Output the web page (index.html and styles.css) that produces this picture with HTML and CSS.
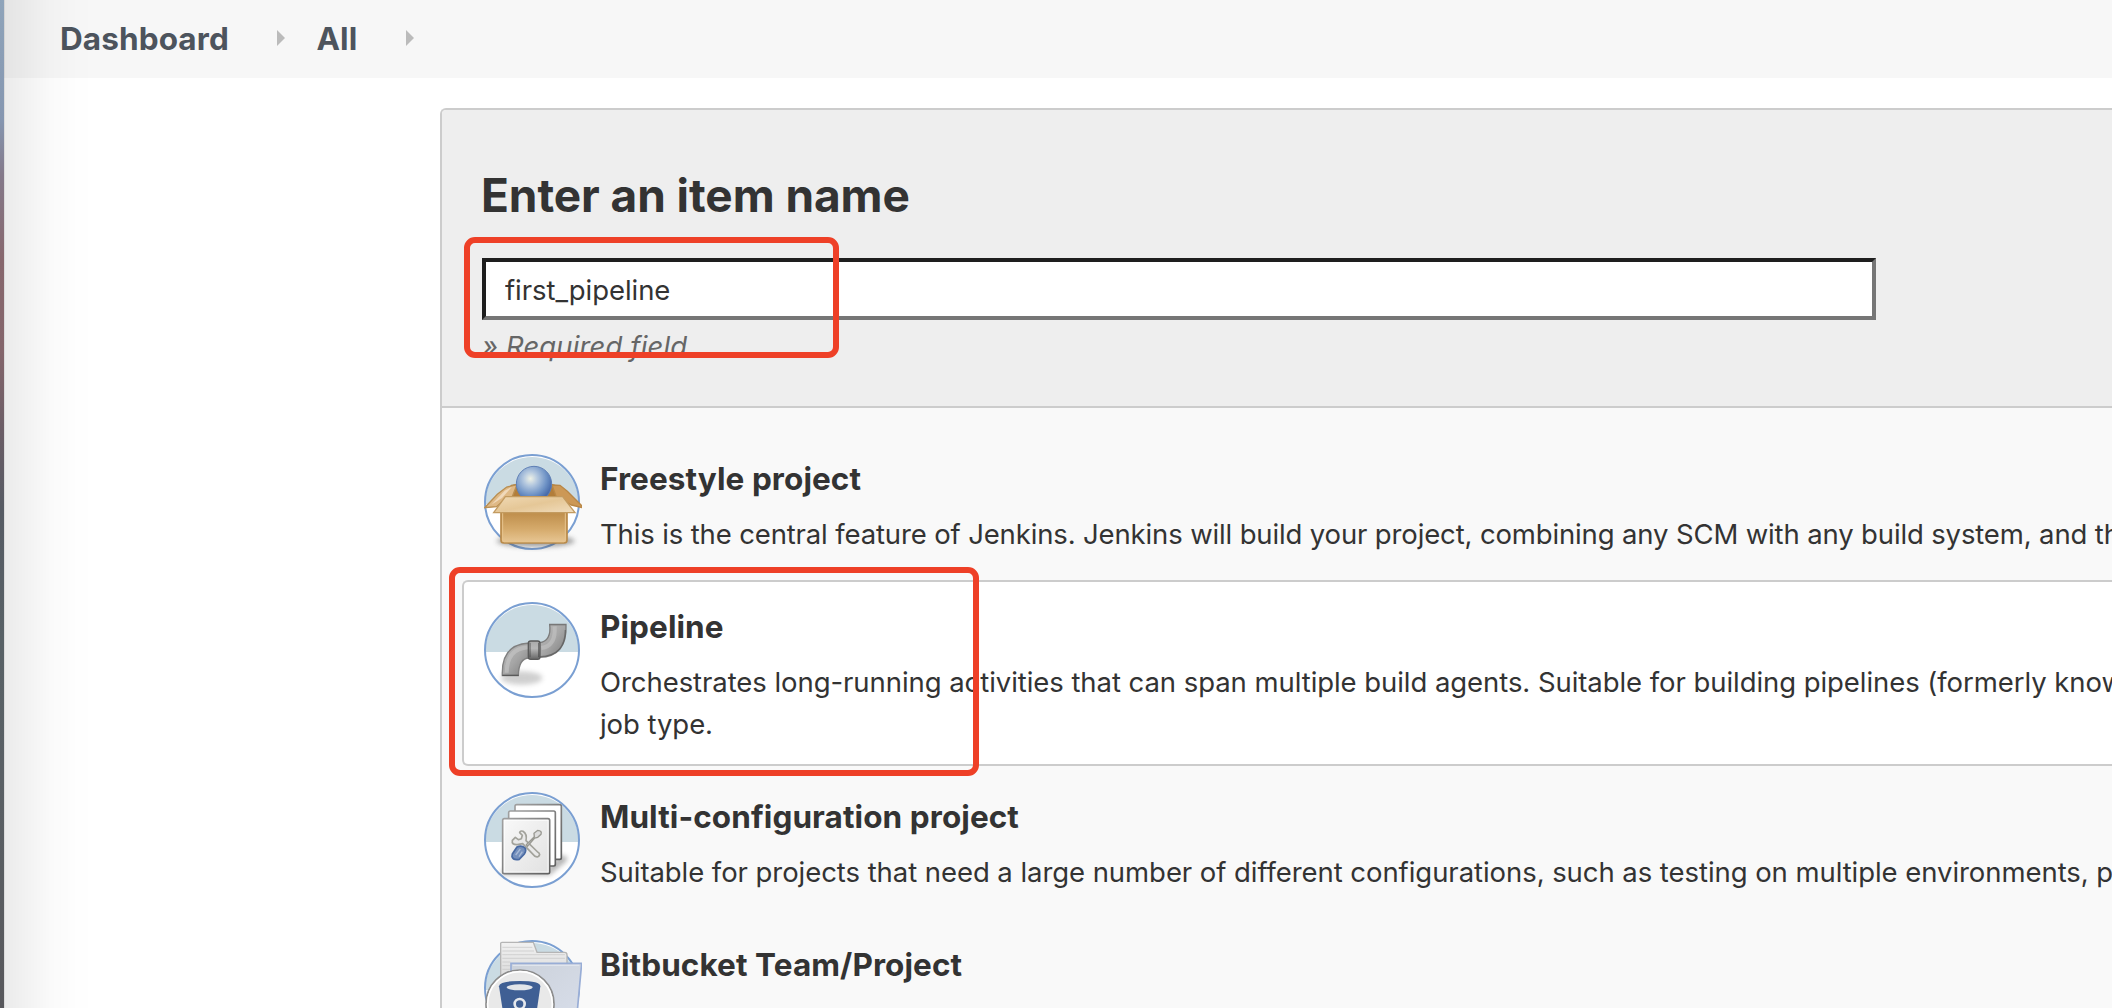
FILE: index.html
```html
<!DOCTYPE html>
<html lang="en">
<head>
<meta charset="utf-8">
<title>New Item [Jenkins]</title>
<link rel="stylesheet" href="styles.css">
</head>
<body>
<div class="window">
  <nav class="breadcrumbs">
    <span class="crumb">Dashboard</span><i class="arrow"></i>
    <span class="crumb">All</span><i class="arrow"></i>
  </nav>
  <main class="panel">
    <section class="name-section">
      <h1>Enter an item name</h1>
      <input class="name-input" type="text" value="first_pipeline">
      <div class="hint">» Required field</div>
      <div class="mark mark-name"></div>
    </section>
    <ul class="items">
      <li class="item item-freestyle">
        <svg class="icon" viewBox="0 0 98 98">
          <defs>
            <linearGradient id="front" x1="0" y1="0" x2="0" y2="1"><stop offset="0" stop-color="#bd8c49"/><stop offset=".55" stop-color="#d5aa6b"/><stop offset="1" stop-color="#e8c795"/></linearGradient>
            <linearGradient id="flap" x1="0" y1="0" x2="1" y2="1"><stop offset="0" stop-color="#f0d9b4"/><stop offset=".5" stop-color="#e5c797"/><stop offset="1" stop-color="#f1ddbd"/></linearGradient>
            <radialGradient id="ball" cx=".4" cy=".35" r=".65"><stop offset="0" stop-color="#eef1e6"/><stop offset=".3" stop-color="#b4c8df"/><stop offset=".7" stop-color="#6f93c6"/><stop offset="1" stop-color="#4568a8"/></radialGradient>
            <filter id="soft" x="-30%" y="-60%" width="160%" height="220%"><feGaussianBlur stdDeviation="8"/></filter>
          </defs>
          <circle cx="48" cy="48" r="47" fill="#fff"/>
          <path d="M1 50a47 47 0 1 1 94 0z" fill="#cadbe3"/>
          <circle cx="48" cy="48" r="47" fill="none" stroke="#7a9fd2" stroke-width="2"/>
          <g class="art" transform="scale(.33333) translate(-42 -42)">
            <ellipse cx="197" cy="303" rx="117" ry="18" fill="#444" opacity=".5" filter="url(#soft)"/>
            <path d="M123 136l20-3h100l20 5-8 34H115z" fill="#b27d3a" stroke="#a5742f" stroke-width="3"/>
            <path d="M246 135l24 1 22 18 50 50-38-9-46-26z" fill="#cc9856" stroke="#b98746" stroke-width="4"/>
            <path d="M141 134l-31 7-28 22-38 40 36-3 30-28 16 0z" fill="#dfb986" stroke="#b98e51" stroke-width="4"/>
            <path d="M104 152l-40 42 32-20 30-34z" fill="#f0d9bb"/>
            <circle cx="192" cy="132" r="53" fill="url(#ball)" stroke="#5f80b5" stroke-width="3"/>
            <path d="M93 215h198v85q0 9-9 9H102q-9 0-9-9z" fill="url(#front)" stroke="#b98a49" stroke-width="5"/>
            <path d="M98 219v82q0 4 5 4h178q5 0 5-4v-82" fill="none" stroke="#e7c48f" stroke-width="3"/>
            <path d="M106 170h172l37 48H71z" fill="url(#flap)" stroke="#c39b60" stroke-width="4"/>
          </g>
        </svg>
        <div class="text"><h2>Freestyle project</h2>
        <p>This is the central feature of Jenkins. Jenkins will build your project, combining any SCM with any build system, and this</p></div>
      </li>
      <li class="item active">
        <svg class="icon" viewBox="0 0 98 98">
          <defs>
            <linearGradient id="pipe" x1="0" y1="0" x2="1" y2="1"><stop offset="0" stop-color="#bdbdbd"/><stop offset=".5" stop-color="#a6a6a6"/><stop offset="1" stop-color="#7c7c7c"/></linearGradient>
            <linearGradient id="coupling" x1="0" y1="0" x2="0" y2="1"><stop offset="0" stop-color="#aaa"/><stop offset=".4" stop-color="#b8b8b8"/><stop offset="1" stop-color="#666"/></linearGradient>
          </defs>
          <circle cx="48" cy="48" r="47" fill="#fff"/>
          <path d="M1 50a47 47 0 1 1 94 0z" fill="#cadbe3"/>
          <circle cx="48" cy="48" r="47" fill="none" stroke="#7a9fd2" stroke-width="2"/>
          <g class="art" transform="scale(.33333) translate(-42 -36)">
            <ellipse cx="155" cy="264" rx="62" ry="20" fill="#777" opacity=".35" filter="url(#soft)"/>
            <path d="M97 257q-4-94 81-98v45q-32 0-33 53z" fill="url(#pipe)" stroke="#808080" stroke-width="4"/>
            <path d="M110 248q1-72 64-76" fill="none" stroke="#c6c6c6" stroke-width="12" opacity=".6"/>
            <path d="M239 103h49q5 97-80 99v-44q37-5 31-55z" fill="url(#pipe)" stroke="#7b7b7b" stroke-width="4"/>
            <path d="M254 109q4 59-40 65" fill="none" stroke="#c6c6c6" stroke-width="12" opacity=".55"/>
            <path d="M97 256h49" stroke="#5a5a5a" stroke-width="4"/>
            <path d="M239 104h49" stroke="#777" stroke-width="4"/>
            <path d="M286 120q0 78-76 80" fill="none" stroke="#555" stroke-width="4" opacity=".6"/>
            <rect x="175" y="153" width="35" height="55" rx="7" fill="url(#coupling)" stroke="#5a5a5a" stroke-width="4"/>
            <path d="M180 158v44M206 158v44" stroke="#444" stroke-width="4" opacity=".6"/>
          </g>
        </svg>
        <div class="text"><h2>Pipeline</h2>
        <p>Orchestrates long-running activities that can span multiple build agents. Suitable for building pipelines (formerly known<br>job type.</p></div>
        <div class="mark mark-item"></div>
      </li>
      <li class="item">
        <svg class="icon" viewBox="0 0 98 98">
          <defs>
            <linearGradient id="paper" x1="0" y1="0" x2="1" y2="1"><stop offset="0" stop-color="#f8f8f8"/><stop offset="1" stop-color="#e2e2e2"/></linearGradient>
            <linearGradient id="edge" x1="0" y1="0" x2="1" y2="1"><stop offset="0" stop-color="#a0a0a0"/><stop offset="1" stop-color="#606060"/></linearGradient>
          </defs>
          <circle cx="48" cy="48" r="47" fill="#fff"/>
          <path d="M1 50a47 47 0 1 1 94 0z" fill="#cadbe3"/>
          <circle cx="48" cy="48" r="47" fill="none" stroke="#7a9fd2" stroke-width="2"/>
          <g class="art" transform="scale(.33333) translate(-42 -36)">
            <path d="M95 270h145v-24h20v-18h30v15l-30 24-20 18H100z" fill="#555" opacity=".45" filter="url(#soft)"/>
            <g fill="#fff" stroke="url(#edge)" stroke-width="5">
              <rect x="135" y="74" width="139" height="164" rx="5"/>
              <rect x="116" y="93" width="140" height="165" rx="5"/>
              <rect x="98" y="116" width="141" height="165" rx="5"/>
            </g>
            <rect x="104" y="122" width="129" height="153" fill="url(#paper)"/>
            <path d="M127 181q-3 14 15 13l16-3 37 38q10 5 14-5-1-6-6-8l-35-34q4-20-9-28-9-3-10 4l8 8-3 10-9 3-9-7z" fill="#e9e9e9" stroke="#a2a29b" stroke-width="5" stroke-linejoin="round"/>
            <path d="M169 194l24-24-1-10 11-9q14 1 10 12l-10 9-9 2-22 25z" fill="#ddd" stroke="#999992" stroke-width="4"/>
            <path d="M127 222l14-21q14-6 24 3 5 8-2 18l-15 16q-18 4-22-8z" fill="#7590bd" stroke="#4869a2" stroke-width="5"/>
            <path d="M137 225l14-18M147 230l10-15" stroke="#a8bad7" stroke-width="4"/>
          </g>
        </svg>
        <div class="text"><h2>Multi-configuration project</h2>
        <p>Suitable for projects that need a large number of different configurations, such as testing on multiple environments, platform</p></div>
      </li>
      <li class="item">
        <svg class="icon" viewBox="0 0 98 98">
          <defs>
            <linearGradient id="folder" x1="0" y1="0" x2="1" y2="1"><stop offset="0" stop-color="#cbd1da"/><stop offset="1" stop-color="#d8deea"/></linearGradient>
            <linearGradient id="sheet" x1="0" y1="0" x2="0" y2="1"><stop offset="0" stop-color="#f1f1f1"/><stop offset="1" stop-color="#c9c9c9"/></linearGradient>
          </defs>
          <circle cx="48" cy="48" r="47" fill="#fff"/>
          <path d="M1 50a47 47 0 1 1 94 0z" fill="#cadbe3"/>
          <circle cx="48" cy="48" r="47" fill="none" stroke="#7a9fd2" stroke-width="2"/>
          <g class="art" transform="scale(.33333) translate(-42 -45)">
            <path d="M92 55q0-3 4-3h94l11 30h83q7 0 7 8v150H92z" fill="url(#sheet)" stroke="#b5b5b5" stroke-width="4"/>
            <path d="M97 67h90M97 78h95M97 89h188M97 100h188M97 111h24M97 122h24M97 133h24" stroke="#c6c6c6" stroke-width="2"/>
            <path d="M123 115h212l-16 175H123z" fill="url(#folder)" stroke="#98add6" stroke-width="5"/>
            <path d="M128 121h200" stroke="#e4e8f0" stroke-width="3"/>
            <circle cx="150" cy="237" r="102" fill="#e9e9e9" stroke="#8c8c8c" stroke-width="5"/>
            <circle cx="150" cy="237" r="97" fill="none" stroke="#fff" stroke-width="5"/>
            <path d="M87 184q0-16 62-16t62 16l-15 103q-47 22-93 0z" fill="#3f5f94"/>
            <ellipse cx="149" cy="187" rx="39" ry="9" fill="#e2e5e9"/>
            <circle cx="149" cy="237" r="15" fill="#3f5f94" stroke="#e6e9ee" stroke-width="8"/>
          </g>
        </svg>
        <div class="text"><h2>Bitbucket Team/Project</h2></div>
      </li>
    </ul>
  </main>
</div>
</body>
</html>
```
FILE: styles.css
```css
* { box-sizing: border-box; }

body {
  margin: 0;
  height: 1008px;
  overflow: hidden;
  padding-left: 4px;
  font-family: Inter, "Liberation Sans", sans-serif;
  font-size: 27.5px;
  color: #333;
  background: linear-gradient(#8fa4ba 0, #8596b0 120px, #84798a 175px, #87676d 260px, #84656b 350px, #6b5d66 430px, #565b64 510px, #586166 640px, #5a6065 780px, #58585c 1008px);
}

.window {
  position: relative;
  height: 1008px;
  background: #fff;
  overflow: hidden;
}

/* shade cast along the window's left edge */
.window::after {
  content: "";
  position: absolute;
  inset: 0 auto 0 0;
  width: 92px;
  border-left: 1px solid rgba(0, 0, 0, .14);
  background: linear-gradient(90deg, rgba(0, 0, 0, .078), rgba(0, 0, 0, .055) 20%, rgba(0, 0, 0, .02) 50%, rgba(0, 0, 0, .005) 80%, transparent);
}

.breadcrumbs {
  display: flex;
  align-items: center;
  height: 78px;
  padding-left: 56px;
  background: #f7f7f7;
}

.crumb {
  font-size: 31.5px;
  font-weight: 700;
  line-height: 76px;
  letter-spacing: .1px;
  color: #4d545d;
}

.arrow {
  margin: -2px 31px 0 48.5px;
  border-left: 8px solid #bbb;
  border-top: 8px solid transparent;
  border-bottom: 8px solid transparent;
}

.panel {
  margin: 30px 0 0 436px;
  border: 2px solid #ccc;
  border-right: 0;
  border-radius: 6px 0 0 0;
  background: #f9f9f9;
  overflow: hidden;
}

.name-section {
  position: relative;
  height: 298px;
  padding: 57px 0 0 40px;
  background: #eee;
  border-bottom: 2px solid #ccc;
}

h1, h2, p { margin: 0; }

h1 {
  margin: 0 0 35px -1px;
  font-size: 46px;
  line-height: 56px;
  font-weight: 700;
  letter-spacing: -.07px;
}

.name-input {
  display: block;
  width: 1394px;
  height: 62px;
  padding: 2px 19px 0;
  border: 4px solid;
  border-color: #1e1e1e #767676 #767676 #1e1e1e;
  border-radius: 0;
  background: #fff;
  font: inherit;
  letter-spacing: -.06px;
  color: #333;
}

.hint {
  margin-top: 5px;
  line-height: 42px;
  font-style: italic;
  letter-spacing: .12px;
  color: #666;
}

.items {
  margin: 0;
  padding: 24px 0 0 20px;
  list-style: none;
  white-space: nowrap;
}

.item {
  position: relative;
  display: flex;
  align-items: flex-start;
  gap: 18px;
  margin-bottom: 4px;
  padding: 20px 0 19px 20px;
  border: 2px solid transparent;
  border-right: 0;
  border-radius: 6px 0 0 6px;
}

.active {
  background: #fff;
  border-color: #ccc;
}

.icon {
  flex: none;
  width: 98px;
  height: 98px;
}

.art { filter: blur(1.4px); }

h2 {
  margin-bottom: 10px;
  font-size: 31.5px;
  line-height: 49px;
  font-weight: 700;
  letter-spacing: .08px;
}

p {
  line-height: 42px;
  letter-spacing: -.06px;
}

.item-freestyle p { letter-spacing: -.14px; }

/* annotation frames */
.mark {
  position: absolute;
  border: 6px solid #ee4027;
  border-radius: 11px;
}

.mark-name {
  left: 22px;
  top: 127px;
  width: 375px;
  height: 121px;
}

.mark-item {
  left: -15px;
  top: -15px;
  width: 530px;
  height: 209px;
}
```
